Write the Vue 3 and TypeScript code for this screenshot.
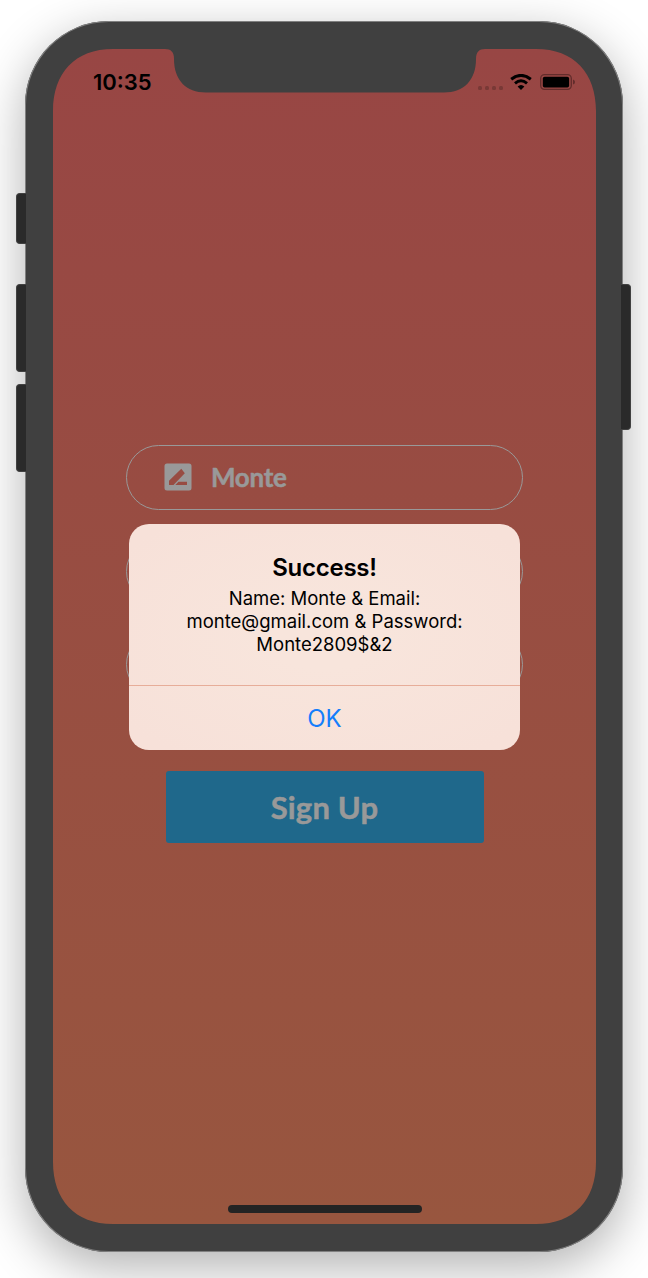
<script setup lang="ts">
const dots = [0, 1, 2, 3]
const user = { name: 'Monte', email: 'monte@gmail.com', password: 'Monte2809$&2' }
const fields = [{ id: 'name', value: user.name }, { id: 'email', value: '' }, { id: 'password', value: '' }]
</script>

<template>
  <div class="stage">
    <span class="key mute"></span>
    <span class="key up"></span>
    <span class="key down"></span>
    <span class="key power"></span>
    <div class="phone">
      <div class="screen">
        <svg class="bezel" viewBox="0 0 543 1175" aria-hidden="true">
          <path class="shell" fill-rule="evenodd" d="M-1-1H544V1176H-1ZM60 0C22 0 0 24 0 62V1113C0 1151 22 1175 60 1175H483C521 1175 543 1151 543 1113V62C543 24 521 0 483 0Z" />
          <path class="shell" d="M112-1V0C118 0 121 3 121 10C121 31 133 43.500 153 43.500H391C411 43.500 423 31 423 10C423 3 426 0 432 0V-1Z" />
        </svg>
        <header class="status">
          <span class="time">10:35</span>
          <div class="signals">
            <div class="dots"><i v-for="d in dots" :key="d"></i></div>
            <svg class="wifi" viewBox="0 0 22 16" aria-hidden="true">
              <path d="M1.200 5.200Q11-2.400 20.800 5.200" />
              <path d="M5 9.300Q11 4.300 17 9.300" />
              <path class="solid" d="M7.600 12.600Q11 9.300 14.400 12.600L11 16Z" />
            </svg>
            <svg class="battery" viewBox="0 0 36 16" aria-hidden="true">
              <rect class="outline" x=".7" y=".7" width="30.600" height="14.600" rx="3.800" />
              <rect x="2.800" y="2.800" width="26.300" height="10.700" rx="1.800" />
              <path class="cap" d="M33 5.500Q35 6 35 8T33 10.500Z" />
            </svg>
          </div>
        </header>
        <form class="form" @submit.prevent>
          <div v-for="f in fields" :key="f.id" class="field">
            <template v-if="f.value">
              <svg class="edit" viewBox="0 0 28 28" aria-hidden="true">
                <path fill-rule="evenodd" d="M3 .5H25Q27.500 .5 27.500 3V25Q27.500 27.500 25 27.500H3Q.5 27.500 .5 25V3Q.5 .5 3 .5ZM5 22H9.500L20.800 10.200 17.300 5.800 5 17.800ZM11.300 22H23V18.700H14.500Z" />
              </svg>
              <span class="value">{{ f.value }}</span>
            </template>
          </div>
          <button class="submit" type="submit">Sign Up</button>
        </form>
        <div class="home"></div>
        <div class="overlay">
          <section class="alert" role="alertdialog">
            <div class="message">
              <h1>Success!</h1>
              <p>Name: {{ user.name }} &amp; Email:<br />{{ user.email }} &amp; Password:<br />{{ user.password }}</p>
            </div>
            <button class="ok" type="button">OK</button>
          </section>
        </div>
      </div>
    </div>
  </div>
</template>

<style>
body { margin: 0; background: #fff; }
</style>

<style scoped>
.stage { position: relative; box-sizing: border-box; width: 648px; height: 1278px; padding: 21px 25px 26px; overflow: hidden; font-family: Inter, "Liberation Sans", sans-serif; background: #fff; }
.phone { position: relative; box-sizing: border-box; width: 598px; height: 1231px; padding: 28px 27px 28px 28px; border-radius: 84px; background: #404040; box-shadow: inset 0 0 0 1px #808080, 0 15px 50px rgba(0, 0, 0, .31); }
.key { position: absolute; z-index: 1; left: 16px; width: 10px; box-sizing: border-box; border: 1px solid #414141; border-right: 0; border-radius: 4px 0 0 4px; background: #2a2a2a; }
.mute { top: 193px; height: 51px; }
.up { top: 284px; height: 88px; }
.down { top: 384px; height: 88px; }
.power { left: 621px; top: 284px; height: 146px; border: 1px solid #414141; border-left: 0; border-radius: 0 4px 4px 0; }
.screen { position: relative; display: flex; flex-direction: column; width: 543px; height: 1175px; background: linear-gradient(#984644, #98563f); }
.bezel { position: absolute; inset: 0; width: 543px; height: 1175px; overflow: visible; }
.shell { fill: #404040; }
.status { position: relative; display: flex; justify-content: space-between; align-items: center; height: 66px; padding: 0 20px 0 40px; box-sizing: border-box; }
.time { font-size: 22px; line-height: 26px; font-weight: 600; color: #000; }
.signals { display: flex; align-items: center; }
.dots { display: flex; gap: 2.900px; margin: 11px 7px 0 0; }
.dots i { width: 4px; height: 4px; border-radius: 1.500px; background: #793936; }
.wifi { width: 22px; height: 16px; margin-right: 8px; fill: none; stroke: #000; stroke-width: 3; }
.wifi .solid { fill: #000; stroke: none; }
.battery { width: 36px; height: 16px; }
.outline { fill: none; stroke: #622c2b; stroke-width: 1.300; }
.cap { fill: #622c2b; }
.form { display: flex; flex-direction: column; align-items: center; gap: 28.700px; padding-top: 330px; }
.field { display: flex; align-items: center; box-sizing: border-box; width: 397px; height: 65px; padding-left: 37px; border: 1px solid #999; border-radius: 33px; }
.edit { width: 28px; height: 28px; margin: -2px 19px 0 0; fill: #999; }
.value { margin-top: -2px; font: 700 26px/30px Lato, sans-serif; letter-spacing: -.3px; color: #999; -webkit-text-stroke: .5px #999; }
.submit { width: 318px; height: 72px; margin-top: 45px; padding: 0 0 1px; border: 0; border-radius: 3px; background: #1f688b; color: #999; font: 700 31px/36px Lato, sans-serif; letter-spacing: .2px; -webkit-text-stroke: .5px #999; }
.home { width: 194px; height: 8px; margin: auto auto 11px; border-radius: 4px; background: #242424; }
.overlay { position: absolute; inset: 0; display: flex; justify-content: center; align-items: center; }
.alert { width: 391px; height: 226px; display: flex; flex-direction: column; overflow: hidden; border-radius: 20px; background: radial-gradient(#f8e5dc 20%, #f7e1d9 90%); }
.message { flex: 1; padding-top: 28px; text-align: center; color: #000; }
h1 { margin: 0 0 3px; font-size: 24px; line-height: 32px; font-weight: 600; letter-spacing: -.25px; }
p { margin: 0; font-size: 18.500px; line-height: 23px; }
.ok { height: 65px; padding: 2px 0 0; border: 0; border-top: 1px solid #e7ad99; background: transparent; color: #147efb; font: 400 24px/30px Inter, sans-serif; }
</style>
